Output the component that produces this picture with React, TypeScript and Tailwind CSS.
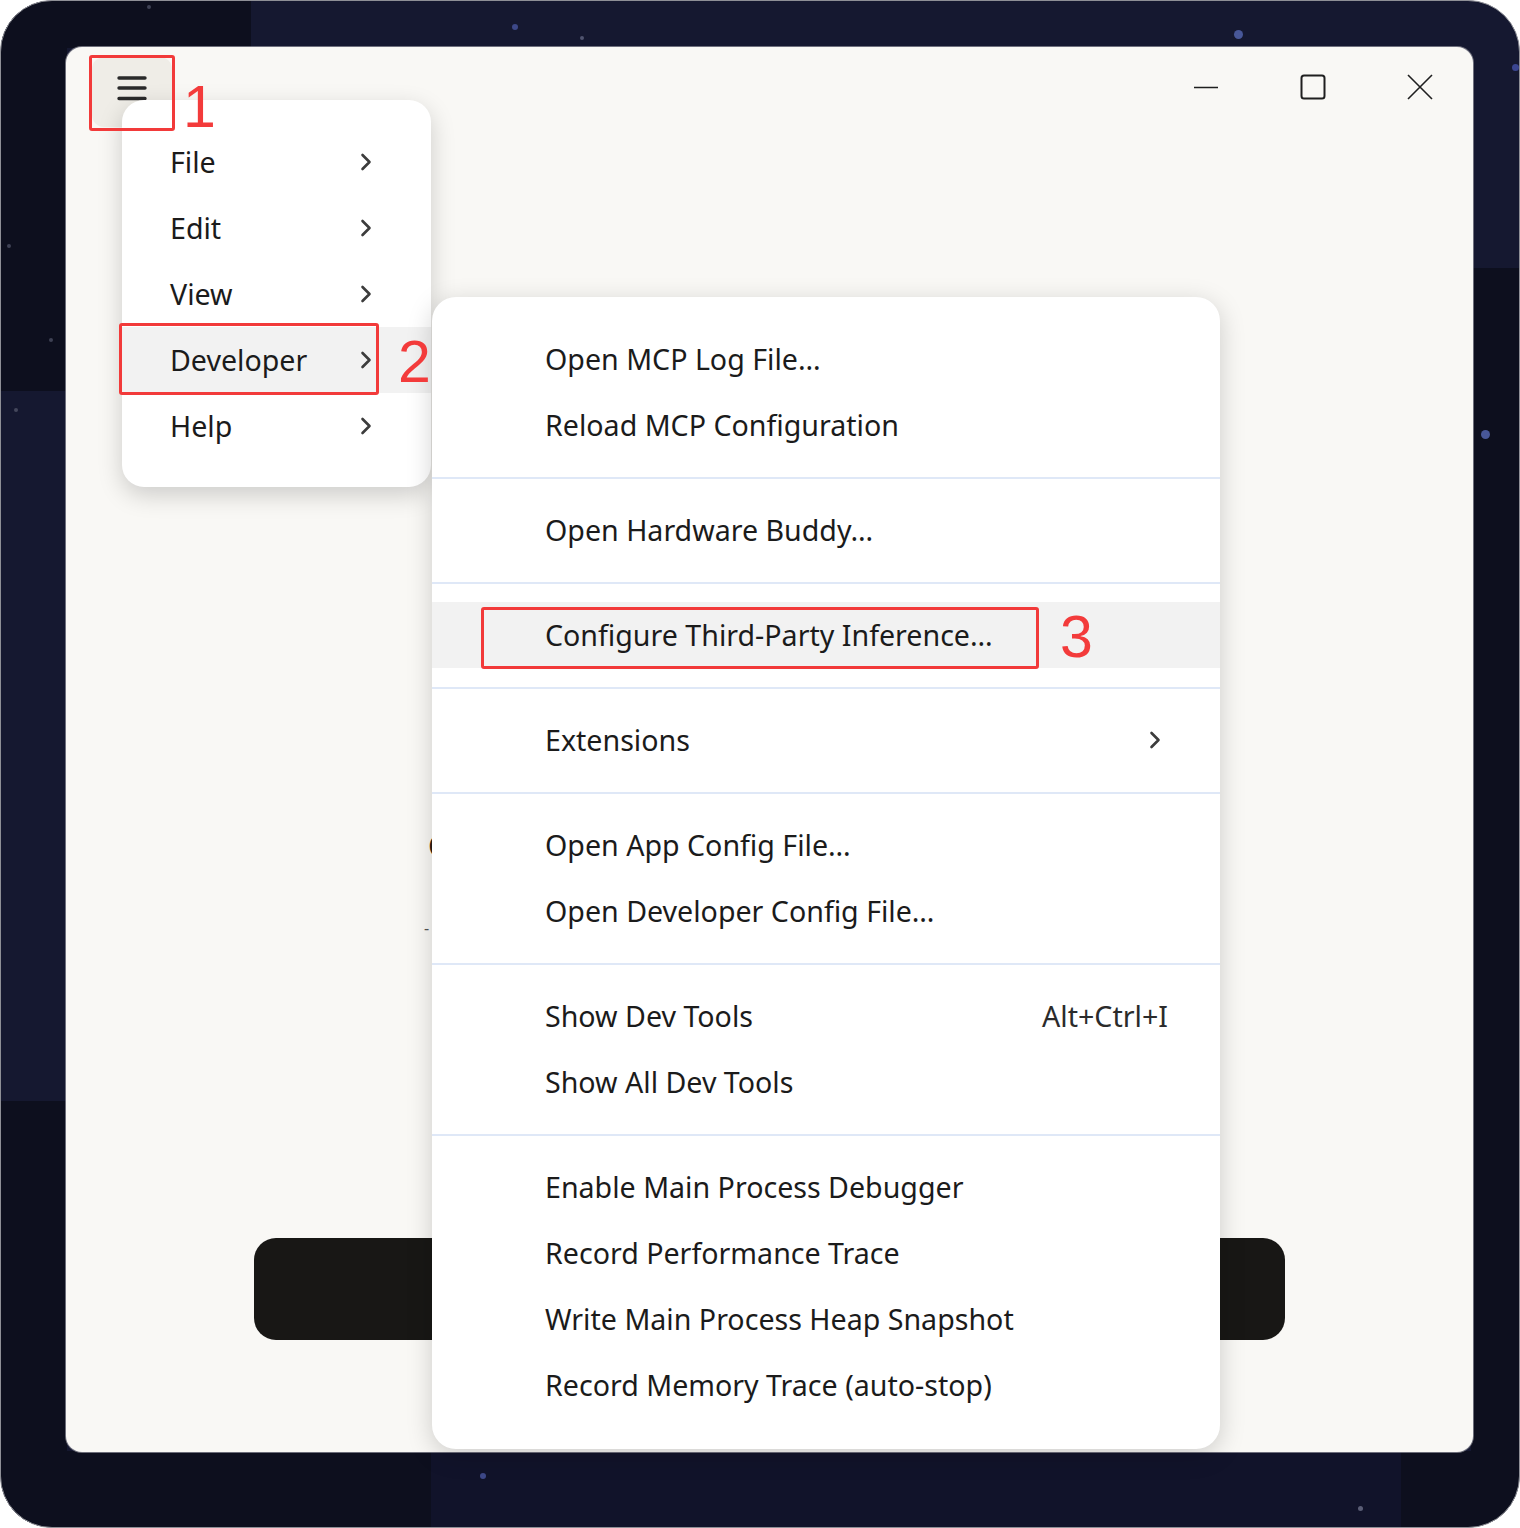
import React from 'react';

type SubItem = { label: string; shortcut?: string; arrow?: boolean; active?: boolean } | 'sep';

const MAIN_ITEMS = ['File', 'Edit', 'View', 'Developer', 'Help'];

const SUB_ITEMS: SubItem[] = [
  { label: 'Open MCP Log File…' },
  { label: 'Reload MCP Configuration' },
  'sep',
  { label: 'Open Hardware Buddy…' },
  'sep',
  { label: 'Configure Third-Party Inference…', active: true },
  'sep',
  { label: 'Extensions', arrow: true },
  'sep',
  { label: 'Open App Config File…' },
  { label: 'Open Developer Config File…' },
  'sep',
  { label: 'Show Dev Tools', shortcut: 'Alt+Ctrl+I' },
  { label: 'Show All Dev Tools' },
  'sep',
  { label: 'Enable Main Process Debugger' },
  { label: 'Record Performance Trace' },
  { label: 'Write Main Process Heap Snapshot' },
  { label: 'Record Memory Trace (auto-stop)' },
];

// decorative dots on the backdrop
const STARS = [
  { x: 514, y: 26, s: 6, c: '#3d4888' },
  { x: 581, y: 37, s: 4, c: '#50546f' },
  { x: 1237, y: 33, s: 9, c: '#485798' },
  { x: 1514, y: 66, s: 7, c: '#3a4590' },
  { x: 1484, y: 433, s: 9, c: '#485798' },
  { x: 148, y: 6, s: 4, c: '#3e4154' },
  { x: 8, y: 245, s: 4, c: '#3e4154' },
  { x: 50, y: 339, s: 4, c: '#3e4154' },
  { x: 15, y: 409, s: 4, c: '#44475c' },
  { x: 482, y: 1475, s: 6, c: '#3d4888' },
  { x: 1359, y: 1507, s: 5, c: '#5a5d75' },
];

const Chevron = ({ className = '' }: { className?: string }) => (
  <svg viewBox="0 0 12 18" className={`h-[18px] w-[12px] ${className}`} fill="none">
    <path d="M2.5 2L9.5 9L2.5 16" stroke="#3c3c3c" strokeWidth="2.6" strokeLinecap="round" strokeLinejoin="round" />
  </svg>
);

const RedBox = ({ className }: { className: string }) => (
  <div className={`pointer-events-none absolute z-30 rounded-[3px] border-[3px] border-[#f23a3a] ${className}`} />
);

const RedNum = ({ n, className }: { n: string; className: string }) => (
  <span
    className={`pointer-events-none absolute z-30 font-['Liberation_Sans',Arial,sans-serif] text-[59px] leading-none text-[#f33b3b] ${className}`}
  >
    {n}
  </span>
);

export default function App() {
  return (
    <div className="min-h-screen bg-white">
      <div className="relative flex h-[1528px] w-[1520px] overflow-hidden rounded-[52px] border border-[#8e8f96] pb-[75px] pl-[65px] pr-[46px] pt-[46px] [background:linear-gradient(#0d0f1e_390px,transparent_390px,transparent_1100px,#0d0f1e_1100px)_left_0_top_0/66px_100%_no-repeat,linear-gradient(to_right,#0d0f1e_250px,transparent_250px)_left_0_top_0/100%_47px_no-repeat,linear-gradient(to_right,#0d0f1e_430px,#11132a_430px,#11132a_1400px,#0d0f1e_1400px)_left_0_bottom_0/100%_76px_no-repeat,linear-gradient(#0d0f1e,#0d0f1e)_right_0_top_267px/48px_1188px_no-repeat,#151830]">
        {STARS.map((s, i) => (
          <span
            key={i}
            className="absolute rounded-full"
            style={{ left: s.x - s.s / 2, top: s.y - s.s / 2, width: s.s, height: s.s, background: s.c }}
          />
        ))}

        {/* app window */}
        <div className="relative flex flex-1 flex-col rounded-[16px] bg-[#f9f8f5] font-['Noto_Sans',sans-serif] text-[#1b1b1b] shadow-[0_0_0_1px_rgba(150,150,160,0.7)]">
          {/* title bar */}
          <div className="flex h-[80px] items-start justify-between">
            <button className="ml-[26px] mt-[10px] flex h-[70px] w-[80px] justify-center rounded-[12px] bg-[#efede7] pt-[18px]">
              <svg viewBox="0 0 30 26" className="h-[26px] w-[30px]" fill="none">
                <path d="M2 3h26M2 13h26M2 23.5h26" stroke="#2a2a2a" strokeWidth="3.4" strokeLinecap="round" />
              </svg>
            </button>
            <div className="flex">
              <div className="flex h-[80px] w-[107px] items-center justify-center">
                <svg viewBox="0 0 26 26" className="h-[26px] w-[26px]" fill="none">
                  <path d="M1 13.5h24" stroke="#1f1f1f" strokeWidth="1.6" />
                </svg>
              </div>
              <div className="flex h-[80px] w-[107px] items-center justify-center">
                <svg viewBox="0 0 26 26" className="h-[26px] w-[26px]" fill="none">
                  <rect x="1.5" y="1.5" width="23" height="23" rx="2.5" stroke="#1f1f1f" strokeWidth="2" />
                </svg>
              </div>
              <div className="flex h-[80px] w-[107px] items-center justify-center">
                <svg viewBox="0 0 26 26" className="h-[26px] w-[26px]" fill="none">
                  <path d="M1 1l24 24M25 1L1 25" stroke="#1f1f1f" strokeWidth="1.6" />
                </svg>
              </div>
            </div>
          </div>

          {/* page content, mostly hidden behind the menus */}
          <div className="flex flex-1 flex-col items-center pb-[112px]">
            <div className="mt-[699px] w-[683px]">
              <p className="text-[30px] leading-[40px] text-[#2a2015]">Connect</p>
              <p className="-ml-[4px] mt-[50px] text-[16px] text-[#555]">-</p>
            </div>
            <button className="mt-auto h-[102px] w-[1031px] rounded-[22px] bg-[#181715]" />
          </div>

          {/* top-level menu */}
          <div className="absolute left-[56px] top-[53px] z-10 w-[309px] rounded-[22px] bg-white pb-[28px] pt-[29px] shadow-[0_8px_24px_rgba(0,0,0,0.18)]">
            {MAIN_ITEMS.map((label) => (
              <div
                key={label}
                className={`flex h-[66px] items-center justify-between pl-[48px] pr-[59px] text-[28.6px] ${
                  label === 'Developer' ? 'bg-[#f2f2f2]' : ''
                }`}
              >
                <span>{label}</span>
                <Chevron />
              </div>
            ))}
          </div>

          {/* Developer submenu */}
          <div className="absolute left-[366px] top-[250px] z-20 w-[788px] rounded-[24px] bg-white pb-[31px] pt-[29px] shadow-[0_6px_26px_rgba(0,0,0,0.18)]">
            {SUB_ITEMS.map((item, i) =>
              item === 'sep' ? (
                <div key={i} className="pb-[18px] pt-[19px]">
                  <div className="h-[2px] bg-[#dfe8f7]" />
                </div>
              ) : (
                <div
                  key={i}
                  className={`flex h-[66px] items-center justify-between pl-[113px] pr-[52px] text-[28.6px] ${
                    item.active ? 'bg-[#f2f2f2]' : ''
                  }`}
                >
                  <span>{item.label}</span>
                  {item.shortcut && <span className="text-[#2b2b2b]">{item.shortcut}</span>}
                  {item.arrow && <Chevron className="mr-[7px]" />}
                </div>
              ),
            )}
          </div>

          {/* annotations */}
          <RedBox className="left-[23px] top-[8px] h-[76px] w-[86px]" />
          <RedNum n="1" className="left-[117px] top-[31px]" />
          <RedBox className="left-[53px] top-[276px] h-[72px] w-[260px]" />
          <RedNum n="2" className="left-[332px] top-[286px]" />
          <RedBox className="left-[415px] top-[560px] h-[62px] w-[558px]" />
          <RedNum n="3" className="left-[994px] top-[561px]" />
        </div>
      </div>
    </div>
  );
}
